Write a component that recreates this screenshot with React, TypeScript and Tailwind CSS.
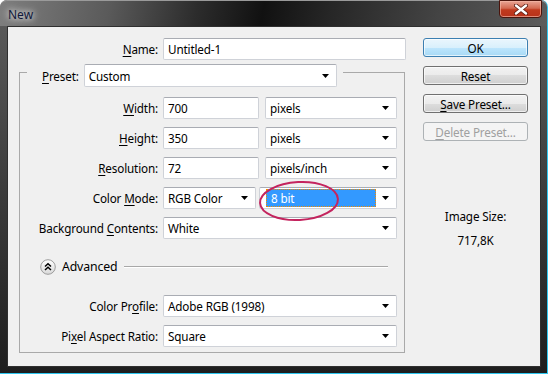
import React from "react";

function Arrow() {
    return (
        <svg width="7" height="4" viewBox="0 0 7 4" className="shrink-0">
            <polygon points="0,0 7,0 3.5,4" fill="#000" />
        </svg>
    );
}

function Field({ value, className }: { value: string; className: string }) {
    return (
        <div className={`h-[22px] ${className} shrink-0 bg-white border border-[#cfd2d8] border-t-[#a9acb3] rounded-[2px] flex items-center pl-[4px] text-black`}>
            {value}
        </div>
    );
}

function Select({ value, className }: { value: string; className: string }) {
    return (
        <div className={`h-[22px] ${className} shrink-0 bg-white border border-[#cfd2d8] border-t-[#a9acb3] rounded-[2px] flex items-center justify-between pl-[4px] pr-[7px] text-black`}>
            <span>{value}</span>
            <Arrow />
        </div>
    );
}

function Label({ children, className = "w-[143px]" }: { children: React.ReactNode; className?: string }) {
    return <div className={`${className} shrink-0 text-right text-black pr-[5px]`}>{children}</div>;
}

function Key({ children }: { children: React.ReactNode }) {
    return <span className="underline underline-offset-[2px]">{children}</span>;
}

function Button({ children, kind = "normal" }: { children: React.ReactNode; kind?: "ok" | "normal" | "disabled" }) {
    const styles = {
        ok: "border-[#3c7fb1] bg-[linear-gradient(#eaf6fd,#d9f0fc_50%,#bee6fd_50%,#a7d9f5)] shadow-[inset_0_0_0_1px_#ffffffaa] text-black",
        normal: "border-[#707070] bg-[linear-gradient(#f2f2f2,#ebebeb_50%,#dddddd_50%,#cfcfcf)] shadow-[inset_0_0_0_1px_#ffffffaa] text-black",
        disabled: "border-[#adb2b5] bg-[#f4f4f4] text-[#a0a0a0]",
    };
    return (
        <div className={`h-[19px] w-[105px] rounded-[3px] border flex items-center justify-center ${styles[kind]}`}>
            {children}
        </div>
    );
}

export default function App() {
    return (
        <div className="w-[548px] h-[374px] bg-white font-['Noto_Sans',sans-serif] text-[11.7px] tracking-[-0.15px] leading-[16px]">
            <div className="w-[548px] h-[374px] rounded-t-[7px] border-r border-b border-[#2ec6ef] bg-[linear-gradient(180deg,#5e5e5e,#3c3c3c_50%,#1e1e1e)] flex flex-col overflow-hidden">
                {/* title bar */}
                <div className="h-[26px] shrink-0 flex items-start justify-between bg-[linear-gradient(100deg,#7e7e7e_0%,#5a5a5a_20%,#2c2c2c_36%,#111111_48%,#262626_60%,#444444_80%,#5c5c5c_100%)] border-t border-[#9a9a9a] rounded-t-[7px]">
                    <div className="pl-[8px] pt-[6px] text-[12px] tracking-normal text-[#10183a] [text-shadow:0_0_6px_#ffffff,0_0_10px_#ffffffaa]">New</div>
                    <div className="shrink-0 mr-[5px] mt-[-1px] w-[43px] h-[18px] rounded-b-[4px] border border-[#4a140c] bg-[linear-gradient(#e9a595,#d36a52_45%,#c03a1e_55%,#b8321a)] shadow-[inset_0_0_0_1px_#f3b7a7aa] flex items-center justify-center">
                        <svg width="14" height="11" viewBox="0 0 14 11">
                            <path d="M2 1.5 L12 9.5 M12 1.5 L2 9.5" stroke="#5a1a10" strokeWidth="4" strokeLinecap="round" />
                            <path d="M2 1.5 L12 9.5 M12 1.5 L2 9.5" stroke="#ffffff" strokeWidth="2.4" strokeLinecap="round" />
                        </svg>
                    </div>
                </div>

                {/* client area */}
                <div className="ml-[7px] w-[534px] h-[341px] shrink-0 border border-[#2f2f2f] bg-[#f0f0f0] flex">
                    {/* left column */}
                    <div className="w-[400px] shrink-0 flex flex-col">
                        <div className="mt-[11px] flex items-center">
                            <Label className="w-[155px]"><Key>N</Key>ame:</Label>
                            <Field value="Untitled-1" className="w-[243px]" />
                        </div>

                        {/* preset group */}
                        <div className="ml-[11px] mt-[12px] w-[386px] border border-[#a9a9a9] pb-[5px] flex flex-col">
                            <div className="mt-[-9px] ml-[7px] self-start bg-[#f0f0f0] pl-[15px] pr-[6px] flex items-center">
                                <div className="text-black pr-[5px]"><Key>P</Key>reset:</div>
                                <Select value="Custom" className="w-[253px] h-[23px]" />
                            </div>

                            <div className="mt-[10px] flex flex-col gap-[8px]">
                                <div className="flex items-center">
                                    <Label><Key>W</Key>idth:</Label>
                                    <Field value="700" className="w-[96px]" />
                                    <Select value="pixels" className="ml-[6px] w-[132px]" />
                                </div>
                                <div className="flex items-center">
                                    <Label><Key>H</Key>eight:</Label>
                                    <Field value="350" className="w-[96px]" />
                                    <Select value="pixels" className="ml-[6px] w-[132px]" />
                                </div>
                                <div className="flex items-center">
                                    <Label><Key>R</Key>esolution:</Label>
                                    <Field value="72" className="w-[96px]" />
                                    <Select value="pixels/inch" className="ml-[6px] w-[132px]" />
                                </div>
                                <div className="flex items-center">
                                    <Label>Color <Key>M</Key>ode:</Label>
                                    <Select value="RGB Color" className="w-[93px]" />
                                    <div className="relative shrink-0 ml-[3px] w-[138px] h-[22px] bg-white border border-[#cfd2d8] border-t-[#a9acb3] rounded-[2px] flex items-center pl-[6px] pr-[7px]">
                                        <div className="flex-1 h-[18px] mr-[6px] bg-[#3399ff] border border-dotted border-[#f08a00] text-white flex items-center pl-[4px]">8 bit</div>
                                        <Arrow />
                                        <svg className="absolute left-[-2px] top-[-8px]" width="82" height="42" viewBox="0 0 82 42">
                                            <ellipse cx="41" cy="21" rx="39" ry="19" fill="none" stroke="#c4245e" strokeWidth="2" transform="rotate(-3 41 21)" />
                                        </svg>
                                    </div>
                                </div>
                                <div className="flex items-center">
                                    <Label>Background <Key>C</Key>ontents:</Label>
                                    <Select value="White" className="w-[234px]" />
                                </div>
                            </div>

                            {/* advanced */}
                            <div className="mt-[20px] h-[16px] flex items-center">
                                <svg className="ml-[20px] shrink-0" width="16" height="16" viewBox="0 0 16 16">
                                    <defs>
                                        <linearGradient id="adv" x1="0" y1="0" x2="0" y2="1">
                                            <stop offset="0" stopColor="#ffffff" />
                                            <stop offset="1" stopColor="#d8d8d8" />
                                        </linearGradient>
                                    </defs>
                                    <circle cx="8" cy="8" r="7.3" fill="url(#adv)" stroke="#9c9c9c" strokeWidth="1" />
                                    <path d="M5 7.5 L8 4.8 L11 7.5 M5 11 L8 8.3 L11 11" fill="none" stroke="#000" strokeWidth="1.5" />
                                </svg>
                                <div className="ml-[6px] text-[12.3px] text-black">Advanced</div>
                                <div className="ml-[7px] mr-[16px] flex-1 border-t border-[#a8a8a8] border-b border-b-white" />
                            </div>

                            <div className="mt-[20px] flex flex-col gap-[8px]">
                                <div className="flex items-center">
                                    <Label>Color Pr<Key>o</Key>file:</Label>
                                    <Select value="Adobe RGB (1998)" className="w-[234px]" />
                                </div>
                                <div className="flex items-center">
                                    <Label>Pi<Key>x</Key>el Aspect Ratio:</Label>
                                    <Select value="Square" className="w-[234px]" />
                                </div>
                            </div>
                        </div>
                    </div>

                    {/* right column */}
                    <div className="ml-[15px] mt-[11px] w-[105px] flex flex-col gap-[9px]">
                        <Button kind="ok">OK</Button>
                        <Button>Reset</Button>
                        <Button><Key>S</Key>ave Preset...</Button>
                        <Button kind="disabled"><Key>D</Key>elete Preset...</Button>
                        <div className="mt-[58px] flex flex-col items-center gap-[8px] text-black">
                            <div>Image Size:</div>
                            <div>717,8K</div>
                        </div>
                    </div>
                </div>
            </div>
        </div>
    );
}
